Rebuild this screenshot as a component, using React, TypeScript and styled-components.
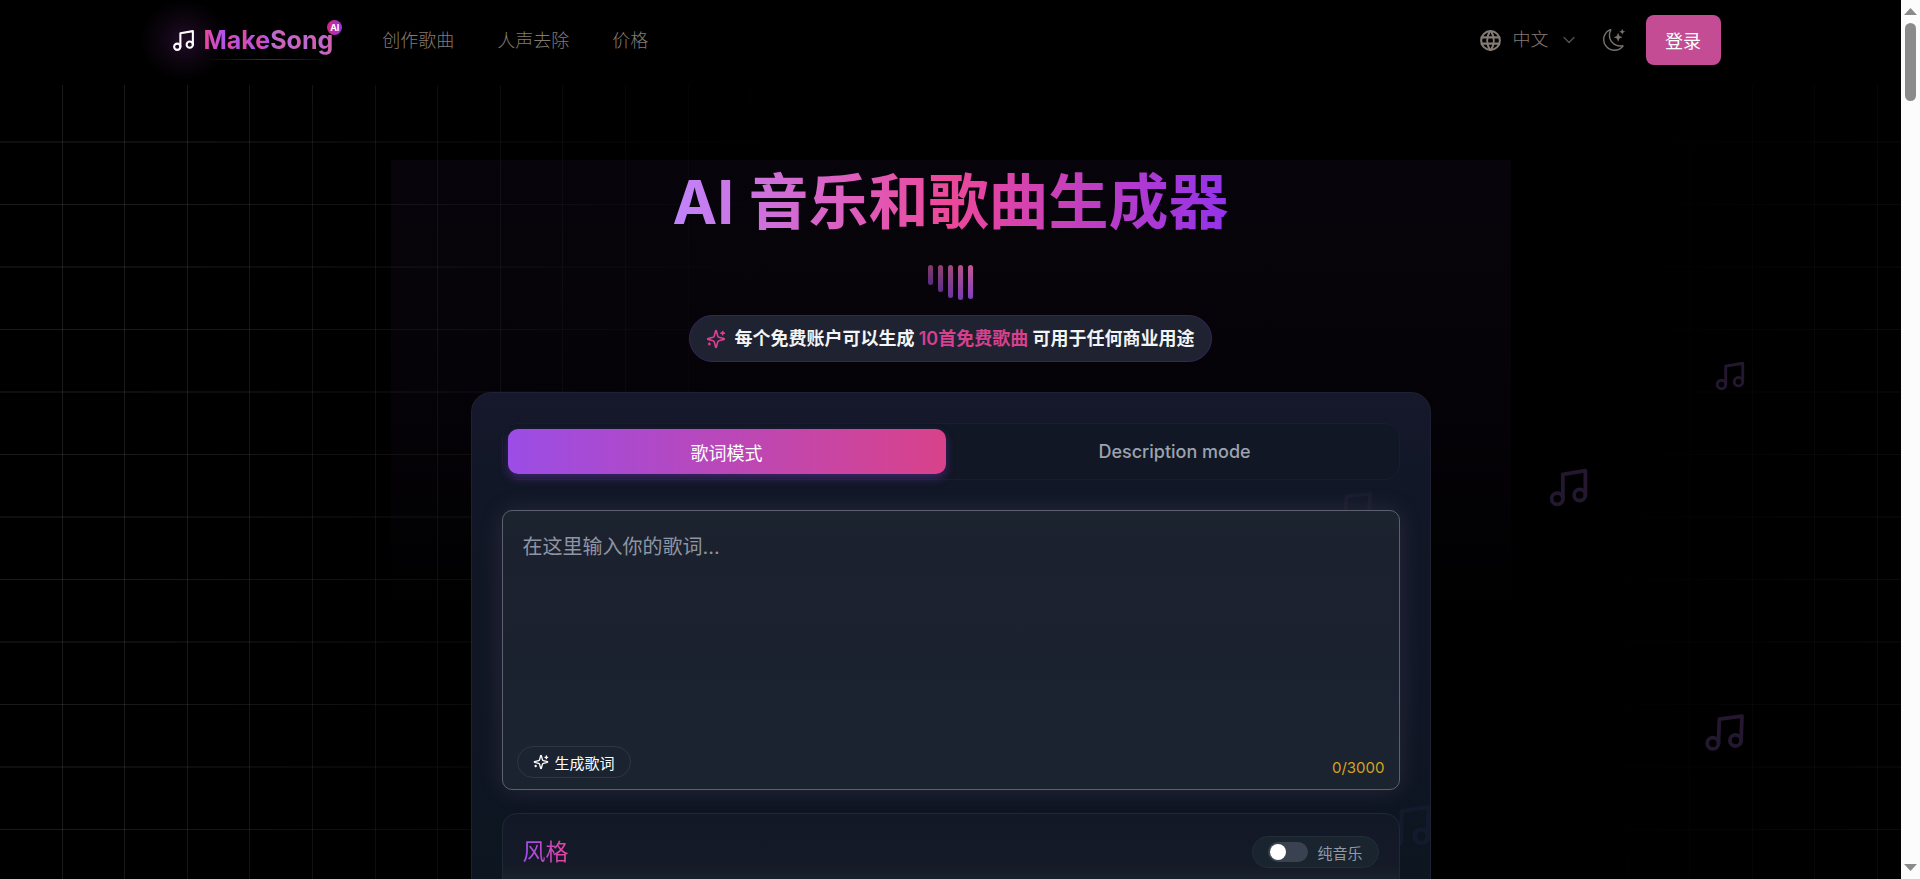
import React from "react";
import styled, { createGlobalStyle, css } from "styled-components";
import { Music, ChevronDown } from "lucide-react";
import { BsMoonStars } from "react-icons/bs";
import { TbWorld } from "react-icons/tb";

const GlobalStyle = createGlobalStyle`
  *, *::before, *::after { box-sizing: border-box; }
  body {
    margin: 0;
    background: #000;
    color: #fff;
    font-family: Inter, "Noto Sans CJK SC", sans-serif;
    font-size: 18px;
  }
  button, input, textarea { font: inherit; color: inherit; }
  button { cursor: pointer; }
`;

const Window = styled.div`
  display: grid;
  grid-template-columns: minmax(0, 1fr) 19px;
  height: 100vh;
  overflow: hidden;
`;

const Page = styled.div`
  position: relative;
  height: 100vh;
  overflow: hidden;
`;

const gridLine = (direction: string, at: number, alpha = 0.1) =>
  `linear-gradient(${direction}, transparent ${at}px, rgba(255, 255, 255, ${alpha}) ${at}px, rgba(255, 255, 255, ${alpha}) ${at + 1}px, transparent ${at + 1}px)`;

const columns = [62, 124, 187, 249, 312].map((x) => gridLine("to right", x));
const rows = [
  gridLine("to bottom", 61, 0.06),
  gridLine("to bottom", 62, 0.06),
  gridLine("to bottom", 124),
];

const GridBackdrop = styled.div`
  position: absolute;
  inset: 80px 0 0;
  background-image: ${[...columns, ...rows].join(", ")};
  background-size: ${[...columns.map(() => "313px 100%"), ...rows.map(() => "100% 125px")].join(", ")};
  mask-image: linear-gradient(95deg, #000 0%, #000 8%, transparent 40%, transparent 84%, rgba(0, 0, 0, 0.45) 100%);
`;

const HeroGlow = styled.div`
  position: absolute;
  top: 160px;
  left: 50%;
  width: 1120px;
  height: 460px;
  transform: translateX(-50%);
  background: linear-gradient(to bottom, rgba(168, 85, 247, 0.045), rgba(168, 85, 247, 0.03) 50%, transparent);
`;

const FloatingNote = styled(Music)<{ $right: number; $y: number; $tone: string; $turn: number }>`
  position: absolute;
  right: ${(p) => p.$right}px;
  top: ${(p) => p.$y}px;
  color: ${(p) => p.$tone};
  transform: rotate(${(p) => p.$turn}deg);
  pointer-events: none;
`;

const Header = styled.header`
  position: relative;
  background: #000;
`;

const HeaderInner = styled.div`
  display: flex;
  align-items: center;
  max-width: 1600px;
  height: 85px;
  margin: 0 auto;
  padding: 0 30px 5px 20px;
`;

const Brand = styled.a`
  position: relative;
  display: flex;
  align-items: center;
  gap: 8px;
  color: #fff;
  text-decoration: none;
  &::before {
    content: "";
    position: absolute;
    left: -32px;
    top: -22px;
    width: 90px;
    height: 82px;
    background: radial-gradient(closest-side, rgba(168, 60, 200, 0.2), rgba(168, 60, 200, 0.07) 55%, transparent);
  }
  svg { position: relative; }
`;

const BrandName = styled.span`
  position: relative;
  font-size: 25px;
  line-height: 38px;
  font-weight: 700;
  &::after {
    content: "";
    position: absolute;
    left: 0;
    right: 0;
    bottom: -1px;
    height: 1px;
    background: linear-gradient(to right, transparent, rgba(236, 72, 153, 0.4), transparent);
  }
`;

const Letter = styled.span<{ $soft?: boolean }>`
  color: transparent;
  background: ${(p) =>
    p.$soft
      ? "linear-gradient(to right, #b36ddc, #d65fa8)"
      : "linear-gradient(to right, #ec4899, #a855f7)"};
  background-clip: text;
  -webkit-background-clip: text;
`;

const BrandBadge = styled.span`
  position: absolute;
  top: -1px;
  right: -9px;
  display: grid;
  place-items: center;
  width: 15px;
  height: 15px;
  border-radius: 8px;
  background: linear-gradient(to right, #db2777, #9333ea);
  font-size: 9px;
  line-height: 15px;
`;

const Nav = styled.nav`
  display: flex;
  gap: 43px;
  margin-left: 49px;
`;

const mutedText = css`
  color: #837b74;
  font-weight: 300;
  line-height: 28px;
`;

const NavLink = styled.a`
  ${mutedText}
  padding-top: 1px;
  text-decoration: none;
`;

const Actions = styled.div`
  display: flex;
  align-items: center;
  margin-left: auto;
`;

const LanguageButton = styled.button`
  ${mutedText}
  display: flex;
  align-items: center;
  gap: 10px;
  margin-right: 24px;
  padding: 0;
  border: 0;
  background: none;
  svg:last-child { color: #57534e; }
`;

const ThemeButton = styled.button`
  display: flex;
  margin-right: 21px;
  padding: 0;
  border: 0;
  background: none;
  color: #78716c;
`;

const LoginButton = styled.button`
  min-width: 75px;
  height: 50px;
  padding: 0 16px;
  border: 0;
  border-radius: 8px;
  background: #c44c95;
  color: #fff;
`;

const Main = styled.main`
  position: relative;
  display: flex;
  flex-direction: column;
  align-items: center;
  padding: 80px 20px 0;
`;

const Title = styled.h1`
  margin: 0;
  font-size: 60px;
  line-height: 75px;
  font-weight: 700;
  color: transparent;
  background: linear-gradient(to right, #c084fc, #ec4899 50%, #9333ea);
  background-clip: text;
  -webkit-background-clip: text;
`;

const Equalizer = styled.div`
  display: flex;
  align-items: flex-start;
  gap: 5px;
  height: 40px;
  margin-top: 25px;
`;

const EqualizerBar = styled.span<{ $height: number; $opacity: number }>`
  width: 5px;
  height: ${(p) => p.$height}px;
  border-radius: 3px;
  background: linear-gradient(to bottom, #ec6bb0, #9b4be8);
  opacity: ${(p) => p.$opacity};
`;

const Promo = styled.p`
  display: flex;
  align-items: center;
  gap: 8px;
  height: 47px;
  margin: 10px 0 30px;
  padding: 0 16px;
  border: 1px solid #38265a;
  border-radius: 24px;
  background: #1e2231;
  color: #f3f4f6;
  font-weight: 700;
  line-height: 28px;
  white-space: pre;
  svg, strong { color: #d6408f; }
  strong { font-weight: 600; }
`;

const Studio = styled.section`
  position: relative;
  display: flex;
  flex-direction: column;
  width: 100%;
  max-width: 960px;
  height: 900px;
  padding: 30px;
  border: 1px solid #1c2233;
  border-radius: 20px;
  background: linear-gradient(to bottom, #16182b, #111726 100px, #111625 300px, #0c1520 500px);
  overflow: hidden;
`;

const Tabs = styled.div`
  position: relative;
  display: grid;
  grid-template-columns: 1fr 1fr;
  gap: 10px;
  height: 57px;
  padding: 5px;
  border: 1px solid #1a1d2e;
  border-radius: 15px;
  background: #111725;
`;

const Tab = styled.button<{ $active?: boolean }>`
  border: 0;
  border-radius: 10px;
  background: none;
  color: #9ca3af;
  font-weight: 500;
  ${(p) =>
    p.$active &&
    css`
      background: linear-gradient(to right, #9b4de6, #d9428a);
      box-shadow: 0 4px 10px rgba(126, 58, 210, 0.4);
      color: #fff;
      font-weight: 400;
    `}
`;

const Lyrics = styled.div`
  position: relative;
  display: flex;
  flex-direction: column;
  height: 280px;
  margin: 30px 0 23px;
  border: 1px solid #5c616d;
  border-radius: 10px;
  background: linear-gradient(to bottom, #1b2530, #1c212e 30px, #1b222f 150px, #1a242f);
  box-shadow: 0 0 24px rgba(190, 160, 210, 0.13);
`;

const LyricsInput = styled.textarea`
  flex: 1;
  width: 100%;
  padding: 20px;
  border: 0;
  outline: 0;
  resize: none;
  background: none;
  font-size: 20px;
  line-height: 32px;
  &::placeholder { color: #8e95a3; opacity: 1; }
`;

const LyricsFooter = styled.div`
  display: flex;
  align-items: center;
  justify-content: space-between;
  padding: 0 14px 11px;
`;

const GenerateButton = styled.button`
  display: flex;
  align-items: center;
  gap: 6px;
  height: 32px;
  padding: 0 15px;
  border: 1px solid #2d3743;
  border-radius: 16px;
  background: none;
  font-size: 15px;
`;

const Counter = styled.span`
  padding-top: 12px;
  color: #d6a321;
  font-size: 15px;
  line-height: 20px;
`;

const StyleCard = styled.section`
  position: relative;
  flex: 1;
  padding: 20px;
  border: 1px solid #1e2936;
  border-radius: 15px;
  background: linear-gradient(to bottom, #121826, #141a26 50px, #1b2430 70px);
`;

const StyleHeader = styled.div`
  display: flex;
  align-items: center;
  justify-content: space-between;
`;

const StyleTitle = styled.h2`
  margin: 0;
  font-size: 23px;
  line-height: 36px;
  font-weight: 400;
  color: transparent;
  background: linear-gradient(to right, #a04df0, #e8459a);
  background-clip: text;
  -webkit-background-clip: text;
`;

const ToggleLabel = styled.label`
  display: flex;
  align-items: center;
  gap: 9px;
  height: 32px;
  padding: 0 15px;
  border: 1px solid #222e39;
  border-radius: 16px;
  background: #1a242e;
  color: #9299a6;
  font-size: 15px;
`;

const Toggle = styled.input`
  appearance: none;
  display: flex;
  align-items: center;
  width: 40px;
  height: 20px;
  margin: 0;
  padding: 0 2px;
  border-radius: 10px;
  background: #3a4151;
  &::before {
    content: "";
    width: 16px;
    height: 16px;
    border-radius: 8px;
    background: #fff;
  }
  &:checked { justify-content: flex-end; background: #9333ea; }
`;

const ScrollRail = styled.div`
  display: flex;
  flex-direction: column;
  align-items: center;
  justify-content: space-between;
  padding: 8px 0;
  background: #fcfcfc;
  color: #8b8b8b;
`;

const ScrollThumb = styled.div`
  width: 11px;
  height: 78px;
  margin: 8px 0 auto;
  border-radius: 6px;
  background: #8b8b8b;
`;

const SparklesIcon = ({ size }: { size: number }) => (
  <svg
    width={size}
    height={size}
    viewBox="0 0 24 24"
    fill="none"
    stroke="currentColor"
    strokeWidth="2"
    strokeLinecap="round"
    strokeLinejoin="round"
    aria-hidden="true"
  >
    <path d="M9.937 15.5A2 2 0 0 0 8.5 14.063l-6.135-1.582a.5.5 0 0 1 0-.962L8.5 9.936A2 2 0 0 0 9.937 8.5l1.582-6.135a.5.5 0 0 1 .963 0L14.063 8.5A2 2 0 0 0 15.5 9.937l6.135 1.581a.5.5 0 0 1 0 .964L15.5 14.063a2 2 0 0 0-1.437 1.437l-1.582 6.135a.5.5 0 0 1-.963 0z" />
    <path d="M20 3v4M22 5h-4M4 17v2M5 18H3" />
  </svg>
);

const bars = [
  { height: 20, opacity: 0.55 },
  { height: 27, opacity: 0.6 },
  { height: 33, opacity: 0.68 },
  { height: 35, opacity: 0.76 },
  { height: 34, opacity: 0.82 },
];

const notes = [
  { right: 154, y: 359, size: 34, tone: "#241830", turn: 0 },
  { right: 310, y: 465, size: 45, tone: "#241830", turn: 0 },
  { right: 154, y: 710, size: 45, tone: "#241830", turn: 2 },
];

const studioNotes = [
  { right: 55, y: 94, size: 47, tone: "#191b2d", turn: 3 },
  { right: -5, y: 407, size: 54, tone: "#121a2b", turn: 1 },
];

type Note = (typeof notes)[number];

const renderNote = (n: Note) => (
  <FloatingNote key={n.y} $right={n.right} $y={n.y} $tone={n.tone} $turn={n.turn} size={n.size} aria-hidden="true" />
);

export default function App() {
  return (
    <Window>
      <GlobalStyle />
      <Page>
        <GridBackdrop />
        <HeroGlow />
        {notes.map(renderNote)}
        <Header>
          <HeaderInner>
            <Brand href="#">
              <Music size={25} />
              <BrandName>
                {[..."Make"].map((c) => <Letter key={c}>{c}</Letter>)}
                {[..."Song"].map((c) => <Letter key={c} $soft>{c}</Letter>)}
                <BrandBadge>AI</BrandBadge>
              </BrandName>
            </Brand>
            <Nav>
              <NavLink href="#">创作歌曲</NavLink>
              <NavLink href="#">人声去除</NavLink>
              <NavLink href="#">价格</NavLink>
            </Nav>
            <Actions>
              <LanguageButton>
                <TbWorld size={25} />
                中文
                <ChevronDown size={20} strokeWidth={1.5} />
              </LanguageButton>
              <ThemeButton aria-label="切换主题">
                <BsMoonStars size={22} />
              </ThemeButton>
              <LoginButton>登录</LoginButton>
            </Actions>
          </HeaderInner>
        </Header>
        <Main>
          <Title>AI 音乐和歌曲生成器</Title>
          <Equalizer>
            {bars.map((b) => <EqualizerBar key={b.height} $height={b.height} $opacity={b.opacity} />)}
          </Equalizer>
          <Promo>
            <SparklesIcon size={20} />
            <span>每个免费账户可以生成 <strong>10首免费歌曲</strong> 可用于任何商业用途</span>
          </Promo>
          <Studio>
            {studioNotes.map(renderNote)}
            <Tabs>
              <Tab $active>歌词模式</Tab>
              <Tab>Description mode</Tab>
            </Tabs>
            <Lyrics>
              <LyricsInput aria-label="歌词" placeholder="在这里输入你的歌词..." />
              <LyricsFooter>
                <GenerateButton>
                  <SparklesIcon size={16} />
                  生成歌词
                </GenerateButton>
                <Counter>0/3000</Counter>
              </LyricsFooter>
            </Lyrics>
            <StyleCard>
              <StyleHeader>
                <StyleTitle>风格</StyleTitle>
                <ToggleLabel>
                  <Toggle type="checkbox" />
                  纯音乐
                </ToggleLabel>
              </StyleHeader>
            </StyleCard>
          </Studio>
        </Main>
      </Page>
      <ScrollRail aria-hidden="true">
        <svg width="13" height="7" viewBox="0 0 26 14"><path d="M0 14 13 0 26 14Z" fill="currentColor" /></svg>
        <ScrollThumb />
        <svg width="13" height="7" viewBox="0 0 26 14"><path d="M0 0 13 14 26 0Z" fill="currentColor" /></svg>
      </ScrollRail>
    </Window>
  );
}
